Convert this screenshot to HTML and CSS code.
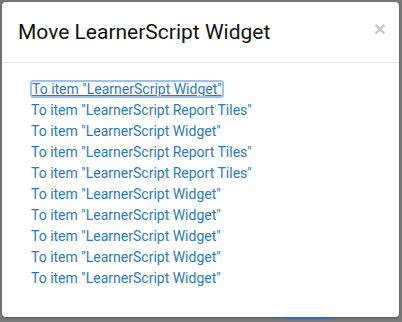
FILE: index.html
```html
<!DOCTYPE html>
<html lang="en">
<head>
  <meta charset="UTF-8" />
  <title>Move LearnerScript Widget</title>
  <link rel="stylesheet" href="styles.css">
</head>
<body>
  <div class="modal">
    <div class="modal-header">
      <h4 class="modal-title">Move LearnerScript Widget</h4>
      <button class="close" type="button">&times;</button>
    </div>
    <div class="modal-body">
      <ul class="move-list">
        <li><a href="#" class="focused">To item "LearnerScript Widget"</a></li>
        <li><a href="#">To item "LearnerScript Report Tiles"</a></li>
        <li><a href="#">To item "LearnerScript Widget"</a></li>
        <li><a href="#">To item "LearnerScript Report Tiles"</a></li>
        <li><a href="#">To item "LearnerScript Report Tiles"</a></li>
        <li><a href="#">To item "LearnerScript Widget"</a></li>
        <li><a href="#">To item "LearnerScript Widget"</a></li>
        <li><a href="#">To item "LearnerScript Widget"</a></li>
        <li><a href="#">To item "LearnerScript Widget"</a></li>
        <li><a href="#">To item "LearnerScript Widget"</a></li>
      </ul>
    </div>
  </div>
  <div class="backdrop-line"></div>
</body>
</html>
```

FILE: styles.css
```css
body {
  margin: 0;
  padding: 2px 3px 0 2px;
  height: 322px;
  box-sizing: border-box;
  background: #7a7a7a;
  font-family: Roboto, "Noto Sans", sans-serif;
  overflow: hidden;
  position: relative;
}
.modal {
  background: #fff;
  border-radius: 4px;
  height: 315px;
  box-shadow: 0 1px 3px rgba(0, 0, 0, 0.3);
}
.modal-header {
  display: flex;
  align-items: center;
  justify-content: space-between;
  height: 61px;
  box-sizing: border-box;
  padding: 0 13px 0 16px;
  border-bottom: 1px solid #e5e5e5;
}
.modal-title {
  margin: 0;
  font-size: 21px;
  font-weight: 400;
  color: #111;
}
.close {
  border: 0;
  background: none;
  padding: 0;
  font-family: "Liberation Sans", Arial, sans-serif;
  font-size: 21px;
  font-weight: 700;
  color: #c8c8c8;
  line-height: 1;
  margin-top: -8px;
}
.modal-body {
  padding: 16px 29px;
}
.move-list {
  list-style: none;
  margin: 0;
  padding: 0;
}
.move-list li {
  line-height: 21px;
  font-size: 14px;
}
.move-list a {
  color: #2b7bb9;
  text-decoration: none;
}
.move-list a.focused {
  text-decoration: underline;
  outline: 2px solid #9ec1f3;
  outline-offset: -1px;
  border-radius: 2px;
  padding: 0 1px;
}
.backdrop-line {
  position: absolute;
  left: 283px;
  top: 317px;
  width: 48px;
  height: 2px;
  background: #3d6a9c;
}
```
